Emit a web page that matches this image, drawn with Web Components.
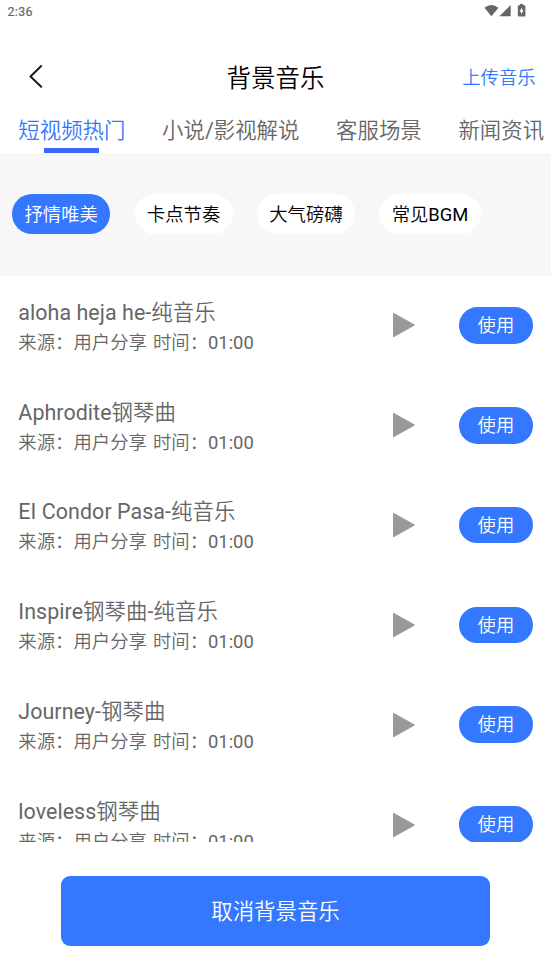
<!DOCTYPE html>
<html lang="zh-CN">
<head>
<meta charset="utf-8">
<title>背景音乐</title>
<style>
html, body { margin: 0; height: 100%; overflow: hidden; background: #fff; }
body { font-family: Roboto, "Noto Sans CJK SC DemiLight", "Noto Sans CJK SC", sans-serif; color: #666; }
</style>
</head>
<body>
<music-page></music-page>
<script>
const define = (name, html) => {
  const template = document.createElement('template');
  template.innerHTML = html;
  customElements.define(name, class extends HTMLElement {
    constructor() {
      super();
      this.attachShadow({ mode: 'open' }).append(template.content.cloneNode(true));
    }
  });
};

define('status-bar', `
<style>
:host { display: flex; justify-content: space-between; height: 24px; padding: 0 25px 0 7.5px; box-sizing: border-box; color: #666; }
span { font-size: 12.4px; font-weight: 400; line-height: 23px; letter-spacing: .35px; -webkit-text-stroke: .2px #666; }
svg { display: block; width: 42px; height: 24px; fill: #666; }
</style>
<span>2:36</span>
<svg viewBox="0 0 42 24">
  <path d="M.4 7.700Q7.400 2.200 14.400 7.700L7.400 16.300z"/>
  <path d="M26.700 5v11.300H15.400z"/>
  <path fill-rule="evenodd" d="M35.900 4h3.200v1.200h1.300q1 0 1 1v9.200q0 1-1 1h-5.600q-1 0-1-1V6.200q0-1 1-1h1.100zM37.500 7.600l-.9 2.400-1.300.9 1.300.9.900 2.400.9-2.400 1.300-.9-1.300-.9z"/>
</svg>`);

define('nav-bar', `
<style>
:host { display: grid; grid-template-columns: 105px 1fr 105px; align-items: center; height: 84px; padding: 24px 15.300px 0; box-sizing: border-box; }
svg { display: block; width: 16px; height: 24px; margin: -3.400px 0 0 12.700px; fill: none; stroke: #1b1b1b; stroke-width: 2; stroke-linecap: round; stroke-linejoin: round; }
h1 { margin: 0; padding-top: 2px; justify-self: center; font-size: 24.480px; font-weight: 400; line-height: 36px; color: #000; }
slot { display: block; text-align: right; font-size: 18.360px; line-height: 28px; color: #3478ff; }
</style>
<svg viewBox="0 0 16 24"><path d="M13.200 2L2.500 12.500l10.700 10.300"/></svg>
<h1>背景音乐</h1>
<slot></slot>`);

define('tab-item', `
<style>
:host { display: flex; flex-direction: column; align-items: center; justify-content: space-between; flex: none; height: 45px; font-size: 21.420px; line-height: 32px; white-space: nowrap; }
:host([active]) { color: #3478ff; }
span { padding-top: 7px; }
i { width: 55px; height: 5px; }
:host([active]) i { background: #3b67ff; }
</style>
<span><slot></slot></span><i></i>`);

define('tab-strip', `
<style>
:host { display: flex; gap: 36.720px; padding-left: 18.360px; height: 45px; overflow: hidden; }
</style>
<slot></slot>`);

define('filter-chip', `
<style>
:host { display: block; padding: 1px 12.240px 0; height: 40px; box-sizing: border-box; border-radius: 20px; background: #fff; color: #000; font-size: 18.360px; line-height: 40px; white-space: nowrap; }
:host([active]) { background: #3478ff; color: #fff; }
</style>
<slot></slot>`);

define('chip-row', `
<style>
:host { display: flex; align-items: center; gap: 24.480px; height: 123px; padding: 0 0 1px 12.240px; box-sizing: border-box; background: #f7f7f7; }
</style>
<slot></slot>`);

define('track-row', `
<style>
:host { display: flex; align-items: center; height: 99.840px; padding: 0 18.360px; box-sizing: border-box; }
.info { flex: 1; white-space: nowrap; padding-top: 2.600px; }
.name { font-size: 21.420px; line-height: 32px; letter-spacing: .06px; }
.meta { font-size: 18.360px; line-height: 28px; word-spacing: 1.500px; }
svg { display: block; width: 24px; height: 28px; margin-right: 43px; fill: #999; stroke: #999; stroke-width: 1; stroke-linejoin: round; }
button { width: 73.440px; height: 36.720px; padding: 0; border: 0; border-radius: 18.360px; background: #3478ff; color: #fff; font: inherit; font-size: 18.360px; line-height: 37px; }
</style>
<div class="info">
  <div class="name"><slot></slot></div>
  <div class="meta">来源：用户分享 时间：01:00</div>
</div>
<svg viewBox="0 0 24 28"><path d="M1.500 2.300L22.500 14 1.500 25.800z"/></svg>
<button>使用</button>`);

define('track-list', `
<style>
:host { display: block; height: 566px; overflow: hidden; }
.rows { margin-top: -.5px; }
</style>
<div class="rows"><slot></slot></div>`);

define('bottom-action', `
<style>
:host { display: block; padding: 34px 61px 0; }
button { display: block; width: 100%; height: 70px; padding: 2px 0 0; border: 0; border-radius: 9px; background: #3478ff; color: #fff; font: inherit; font-size: 21.420px; line-height: 68px; }
</style>
<button><slot></slot></button>`);

define('music-page', `
<style>
:host { display: flex; flex-direction: column; height: 100vh; overflow: hidden; }
</style>
<status-bar></status-bar>
<nav-bar>上传音乐</nav-bar>
<tab-strip>
  <tab-item active>短视频热门</tab-item>
  <tab-item>小说/影视解说</tab-item>
  <tab-item>客服场景</tab-item>
  <tab-item>新闻资讯</tab-item>
</tab-strip>
<chip-row>
  <filter-chip active>抒情唯美</filter-chip>
  <filter-chip>卡点节奏</filter-chip>
  <filter-chip>大气磅礴</filter-chip>
  <filter-chip>常见BGM</filter-chip>
</chip-row>
<track-list>
  <track-row>aloha heja he-纯音乐</track-row>
  <track-row>Aphrodite钢琴曲</track-row>
  <track-row>EI Condor Pasa-纯音乐</track-row>
  <track-row>Inspire钢琴曲-纯音乐</track-row>
  <track-row>Journey-钢琴曲</track-row>
  <track-row>loveless钢琴曲</track-row>
</track-list>
<bottom-action>取消背景音乐</bottom-action>`);
</script>
</body>
</html>
